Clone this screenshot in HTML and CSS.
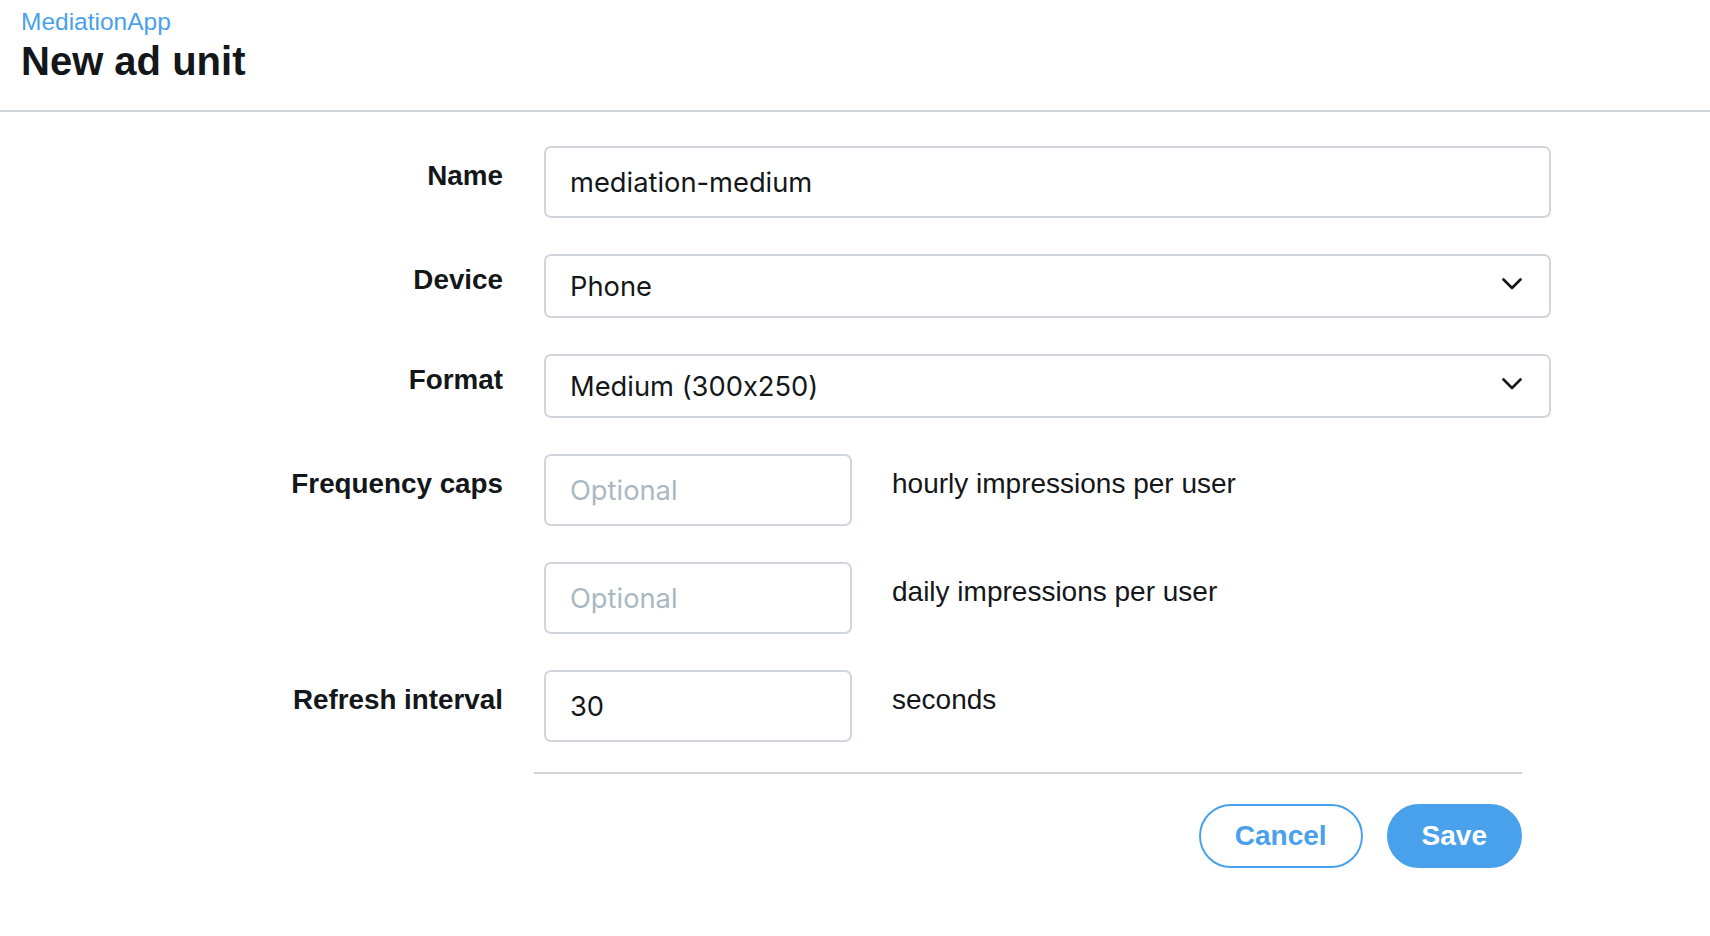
FILE: index.html
```html
<!DOCTYPE html>
<html lang="en">
<head>
<meta charset="utf-8">
<title>New ad unit</title>
<link rel="stylesheet" href="styles.css">
</head>
<body>
<header class="page-header">
  <div class="app-name">MediationApp</div>
  <h1 class="page-title">New ad unit</h1>
</header>
<form class="form">
  <label class="field-label" for="name">Name</label>
  <div class="control">
    <input class="text-input wide" id="name" type="text" value="mediation-medium">
  </div>

  <label class="field-label" for="device">Device</label>
  <div class="control">
    <div class="select-wrap">
      <select class="select" id="device">
        <option>Phone</option>
        <option>Tablet</option>
      </select>
      <svg class="chevron" viewBox="0 0 20 12" width="20" height="12" aria-hidden="true">
        <path d="M1.5 1.5 L10 10 L18.5 1.5" fill="none" stroke="#14171a" stroke-width="2.6" stroke-linecap="round" stroke-linejoin="round"/>
      </svg>
    </div>
  </div>

  <label class="field-label" for="format">Format</label>
  <div class="control">
    <div class="select-wrap">
      <select class="select" id="format">
        <option>Medium (300x250)</option>
        <option>Banner (320x50)</option>
      </select>
      <svg class="chevron" viewBox="0 0 20 12" width="20" height="12" aria-hidden="true">
        <path d="M1.5 1.5 L10 10 L18.5 1.5" fill="none" stroke="#14171a" stroke-width="2.6" stroke-linecap="round" stroke-linejoin="round"/>
      </svg>
    </div>
  </div>

  <label class="field-label" for="hourly">Frequency caps</label>
  <div class="control inline">
    <input class="text-input small" id="hourly" type="text" placeholder="Optional">
    <span class="unit">hourly impressions per user</span>
  </div>

  <span class="field-label"></span>
  <div class="control inline">
    <input class="text-input small" id="daily" type="text" placeholder="Optional">
    <span class="unit">daily impressions per user</span>
  </div>

  <label class="field-label" for="refresh">Refresh interval</label>
  <div class="control inline">
    <input class="text-input small" id="refresh" type="text" value="30">
    <span class="unit">seconds</span>
  </div>
</form>
<div class="footer">
  <div class="actions">
    <button class="btn btn-outline" type="button">Cancel</button>
    <button class="btn btn-primary" type="button">Save</button>
  </div>
</div>
</body>
</html>
```
FILE: styles.css
```css
* {
  box-sizing: border-box;
}

body {
  margin: 0;
  background: #ffffff;
  color: #14171a;
  font-family: "Liberation Sans", Arial, sans-serif;
}

.page-header {
  padding: 8px 21px 25px;
  border-bottom: 2px solid #d0d5da;
}

.app-name {
  color: #4aa1eb;
  font-size: 24.5px;
  line-height: 28px;
}

.page-title {
  margin: 1px 0 0;
  font-size: 40px;
  line-height: 48px;
  font-weight: 700;
  color: #14171a;
}

.form {
  display: grid;
  grid-template-columns: 503px 1007px;
  column-gap: 41px;
  row-gap: 36px;
  align-items: center;
  padding-top: 34px;
}

.field-label {
  font-size: 27.8px;
  line-height: 34px;
  font-weight: 700;
  text-align: right;
  margin-bottom: 12px;
  color: #14171a;
}

.control {
  display: flex;
  align-items: center;
}

.control.inline {
  gap: 40px;
}

.text-input,
.select {
  font-family: Inter, "Liberation Sans", sans-serif;
  font-size: 27.3px;
  font-feature-settings: "calt" 0;
  color: #14171a;
  border: 2px solid #d0d6dc;
  border-radius: 7px;
  background: #ffffff;
  padding: 0 24px;
  outline: none;
}

.text-input {
  height: 72px;
}

.text-input::placeholder {
  color: #aab8c2;
}

.wide {
  width: 1007px;
}

.small {
  width: 308px;
}

.select-wrap {
  position: relative;
  width: 1007px;
}

.select {
  width: 100%;
  height: 64px;
  appearance: none;
  -webkit-appearance: none;
}

.chevron {
  position: absolute;
  right: 29px;
  top: 24px;
  pointer-events: none;
}

.unit {
  font-size: 28px;
  line-height: 34px;
  margin-bottom: 12px;
  color: #14171a;
}

.footer {
  margin: 30px 0 0 534px;
  width: 988px;
  border-top: 2px solid #d0d5da;
}

.actions {
  display: flex;
  justify-content: flex-end;
  gap: 24px;
  padding-top: 30px;
}

.btn {
  height: 64px;
  border-radius: 32px;
  border: 2px solid #4aa1eb;
  font-family: "Liberation Sans", Arial, sans-serif;
  font-size: 28px;
  font-weight: 700;
  padding: 0 34px;
  cursor: pointer;
}

.btn-outline {
  background: #ffffff;
  color: #4aa1eb;
}

.btn-primary {
  background: #4aa1eb;
  color: #ffffff;
  padding: 0 33px;
}
```
